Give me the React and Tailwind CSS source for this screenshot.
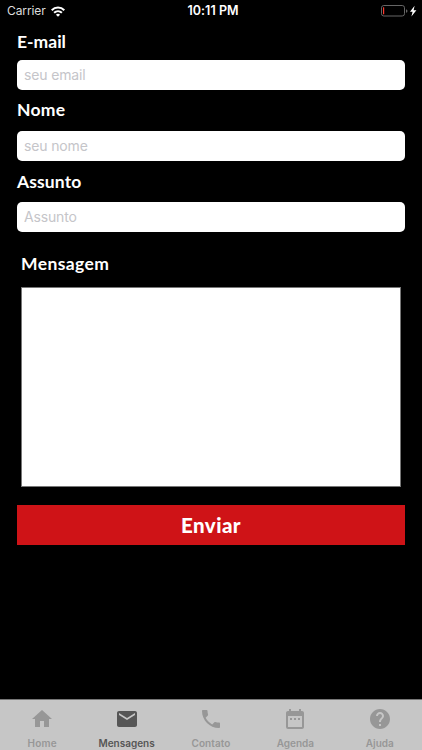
import { MdHome, MdEmail, MdPhone, MdDateRange, MdHelp } from "react-icons/md";

const tabs = [
  { name: "Home", Icon: MdHome, spacing: "tracking-[0.2px]" },
  { name: "Mensagens", Icon: MdEmail, active: true, spacing: "tracking-normal" },
  { name: "Contato", Icon: MdPhone, spacing: "tracking-[0.1px]" },
  { name: "Agenda", Icon: MdDateRange, spacing: "tracking-normal" },
  { name: "Ajuda", Icon: MdHelp, spacing: "tracking-normal" },
];

function StatusBar() {
  return (
    <header className="grid h-[22px] grid-cols-3 items-center pl-[7px] pr-[5px] text-white">
      <div className="flex items-center gap-[6px]">
        <span className="w-[38px] text-[12px] leading-[22px] tracking-[-0.1px] text-[#dddddd]">Carrier</span>
        <svg width="14" height="11" viewBox="0 0 14 11" fill="none" stroke="#fff" strokeWidth="2">
          <path d="M.7 4.2C4.2.6 9.8.6 13.3 4.2" />
          <path d="M3.1 6.8C5.3 4.7 8.7 4.7 10.9 6.8" />
          <path d="M7 10.8 4.9 8.7Q7 7 9.1 8.7Z" fill="#fff" stroke="none" />
        </svg>
      </div>
      <span className="pl-[2px] text-center text-[12.5px] font-semibold leading-[22px] tracking-[0.05px]">10:11 PM</span>
      <svg className="justify-self-end" width="37" height="12" viewBox="0 0 37 12">
        <rect x="1.5" y=".5" width="23" height="10.5" rx="2.3" fill="none" stroke="#666" />
        <rect x="3" y="2.3" width="1.2" height="7" rx=".3" fill="#ff3b30" />
        <path d="M26 4.2q1.5.4 1.5 1.8T26 7.8Z" fill="#666" />
        <path d="m34.6.8-4.6 6h2.6l-1.2 4.7 5-6.2h-2.8Z" fill="#fff" />
      </svg>
    </header>
  );
}

function Field({ label, placeholder, gap, spacing, id }) {
  return (
    <div className={`flex flex-col ${gap}`}>
      <label htmlFor={id} className={`font-[Lato,sans-serif] text-[17.5px] font-bold leading-[22px] text-white ${spacing}`}>
        {label}
      </label>
      <input
        id={id}
        placeholder={placeholder}
        className="h-[30px] w-full rounded-[5px] bg-white px-[7px] pb-[2px] text-[14px] tracking-[-0.15px] placeholder:text-[#c5c5c9]"
      />
    </div>
  );
}

export default function App() {
  return (
    <div className="flex h-[750px] w-[422px] flex-col overflow-hidden bg-black font-[Inter,sans-serif]">
      <StatusBar />
      <main className="flex flex-1 flex-col px-[17px] pt-[9px]">
        <Field id="email" label="E-mail" placeholder="seu email" gap="gap-[7px]" spacing="tracking-normal" />
        <div className="mt-[9px]">
          <Field id="nome" label="Nome" placeholder="seu nome" gap="gap-[10px]" spacing="tracking-[0.3px]" />
        </div>
        <div className="mt-[10px]">
          <Field id="assunto" label="Assunto" placeholder="Assunto" gap="gap-[9px]" spacing="tracking-[0.1px]" />
        </div>
        <div className="mt-[21px] flex flex-col gap-[12px] px-1">
          <label htmlFor="mensagem" className="font-[Lato,sans-serif] text-[17.5px] font-bold leading-[22px] tracking-[0.4px] text-white">
            Mensagem
          </label>
          <textarea id="mensagem" className="block h-[200px] w-full resize-none border border-[#777] bg-white" />
        </div>
        <button className="mt-[18px] h-[40px] w-full bg-[#cf1317] font-[Lato,sans-serif] text-[20.5px] font-black leading-[40px] tracking-[0.4px] text-white">
          Enviar
        </button>
      </main>
      <nav className="grid h-[51px] grid-cols-5 border-t border-[#777] bg-[#c6c6c6]">
        {tabs.map(({ name, Icon, active, spacing }) => (
          <div key={name} className={`flex flex-col items-center pt-[7px] ${active ? "text-[#565656]" : "text-[#979797]"}`}>
            <Icon size={24} />
            <span className={`mt-[5px] text-[10px] font-semibold leading-[14px] ${spacing}`}>{name}</span>
          </div>
        ))}
      </nav>
    </div>
  );
}
